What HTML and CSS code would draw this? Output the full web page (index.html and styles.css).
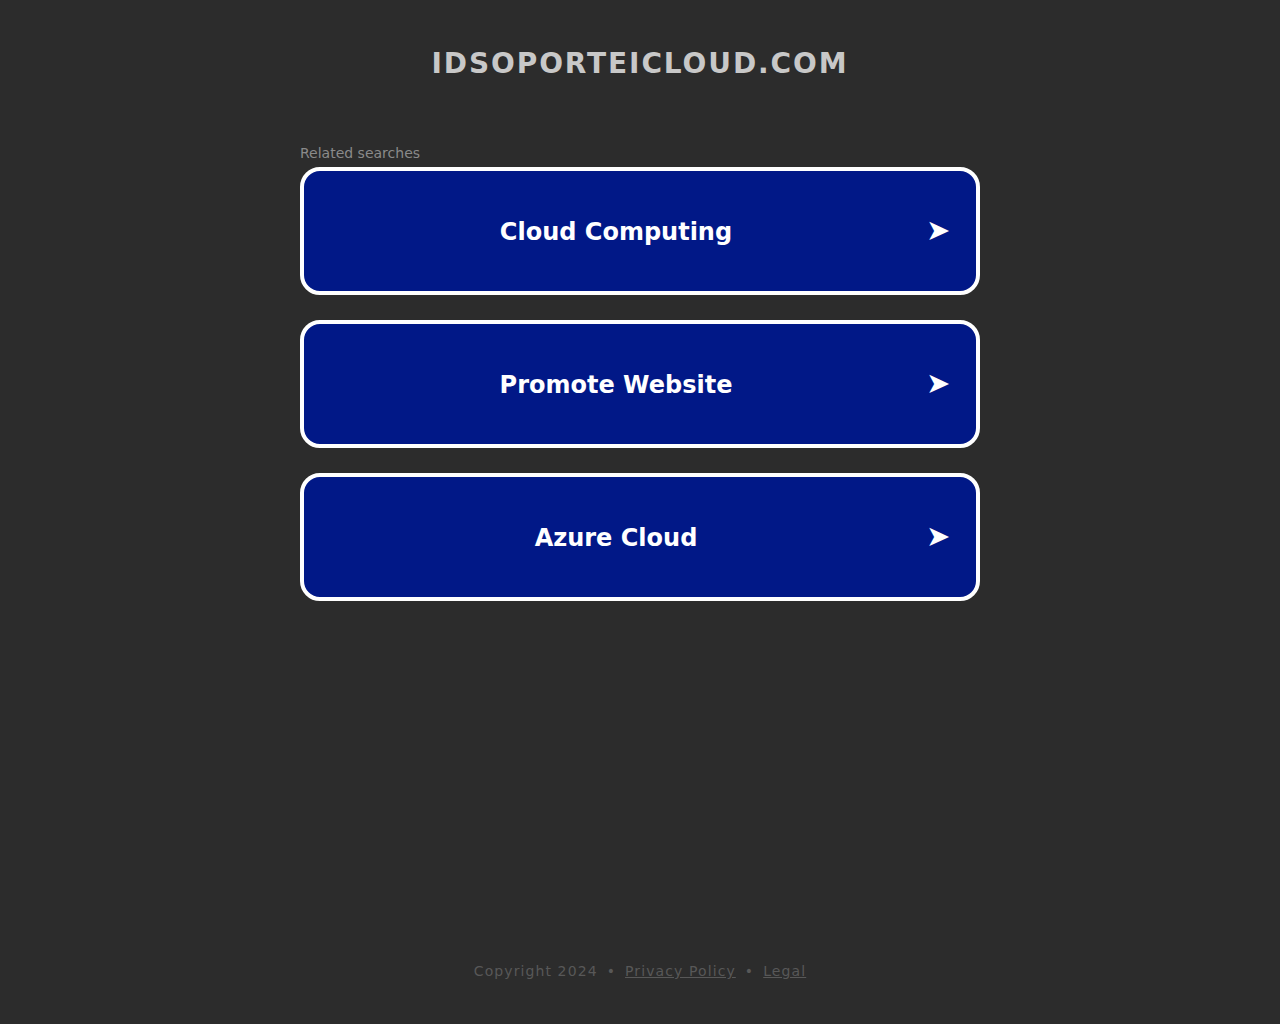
FILE: index.html
```html
<!DOCTYPE html>
<html>
<head>
<meta charset="utf-8">
<link rel="stylesheet" href="styles.css">
</head>
<body>
<div class="page">
  <header class="header">
    <h1 class="domain">IDSOPORTEICLOUD.COM</h1>
  </header>
  <main class="main">
    <div class="related">Related searches</div>
    <div class="list">
      <a class="item" href="#"><span class="label">Cloud Computing</span><span class="arrow">➤</span></a>
      <a class="item" href="#"><span class="label">Promote Website</span><span class="arrow">➤</span></a>
      <a class="item" href="#"><span class="label">Azure Cloud</span><span class="arrow">➤</span></a>
    </div>
  </main>
  <footer class="footer">
    <span>Copyright 2024</span><span class="dot">•</span><a href="#" class="flink">Privacy Policy</a><span class="dot">•</span><a href="#" class="flink">Legal</a>
  </footer>
</div>
</body>
</html>
```
FILE: styles.css
```css
html, body {
  margin: 0;
  padding: 0;
  background: #2c2c2c;
  font-family: "DejaVu Sans", sans-serif;
}
.page {
  height: 1024px;
  display: flex;
  flex-direction: column;
  align-items: center;
}
.header {
  padding-top: 46px;
}
.domain {
  margin: 0;
  font-size: 28px;
  font-weight: bold;
  letter-spacing: 1.9px;
  color: #c8c8c8;
  line-height: 36px;
}
.main {
  width: 680px;
  margin-top: 62px;
}
.related {
  font-size: 14px;
  color: #8a8a8a;
  line-height: 18px;
  margin-bottom: 5px;
}
.list {
  display: flex;
  flex-direction: column;
  gap: 25px;
}
.item {
  box-sizing: border-box;
  height: 128px;
  border: 4px solid #ffffff;
  border-radius: 20px;
  background: #011887;
  display: flex;
  align-items: center;
  text-decoration: none;
  color: #ffffff;
  padding: 0 28px 0 2px;
}
.label {
  flex: 1;
  text-align: center;
  font-size: 24px;
  font-weight: bold;
  padding-top: 2px;
}
.arrow {
  font-size: 29px;
  width: 22px;
  text-align: center;
  padding-bottom: 2px;
}
.footer {
  margin-top: auto;
  margin-bottom: 45px;
  font-size: 14px;
  letter-spacing: 1.1px;
  color: #585858;
}
.dot {
  margin: 0 9px;
}
.flink {
  color: #585858;
}
```
